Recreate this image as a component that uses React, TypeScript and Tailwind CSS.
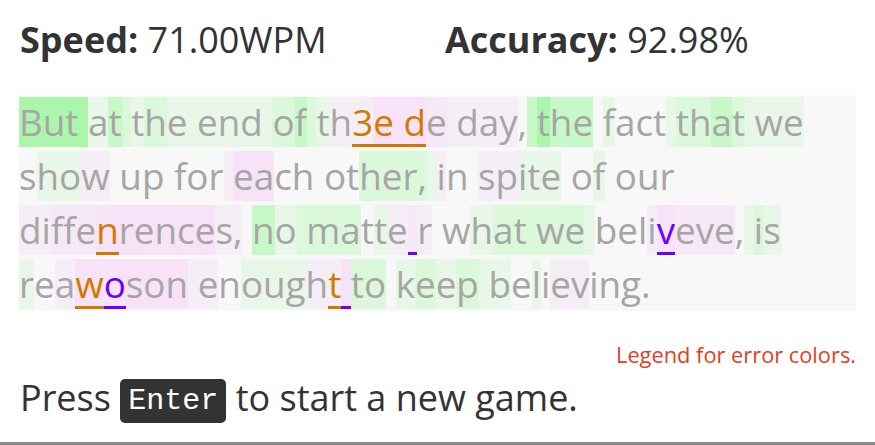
import React from 'react';

// level codes: 3/2/1/0 = greens (strong to faint), a/b/c = pinks (faint to strong), . = none
// err: o = wrong char (orange), v = missed/extra char (violet)
type Seg = [string, string, string?];

const lines: Seg[][] = [
  [
    ["But ", "3"], ["a", "0"], ["t", "2"], [" ", "1"], ["t", "0"], ["h", "1"], ["e end ", "0"],
    ["o", "1"], ["f", "2"], [" ", "1"], ["t", "0"], ["h", "a"], ["3", "a", "o"], ["e d", "c", "o"],
    ["e", "b"], [" day", "a"], [",", "."], [" ", "2"], ["t", "3"], ["he", "2"], [" ", "."],
    ["f", "0"], ["act", "."], [" ", "0"], ["th", "1"], ["a", "2"], ["t", "1"], [" we", "0"],
  ],
  [
    ["s", "."], ["ho", "0"], ["w", "a"], [" up for", "."], [" ", "a"], ["ea", "c"], ["ch ot", "."],
    ["her,", "1"], [" ", "0"], ["i", "a"], ["n", "."], [" ", "."], ["sp", "a"], ["ite", "0"],
    [" o", "."], ["f", "0"], [" our", "."],
  ],
  [
    ["di", "a"], ["ffe", "b"], ["n", "c", "o"], ["rence", "c"], ["s,", "a"], [" ", "."], ["n", "2"],
    ["o", "0"], [" ma", "1"], ["t", "."], ["t", "0"], ["e", "a"], [" ", "b", "v"], ["r", "a"],
    [" w", "."], ["h", "0"], ["at we", "1"], [" ", "0"], ["bel", "."], ["i", "a"], ["v", "c", "v"],
    ["eve", "b"], [",", "."], [" ", "0"], ["i", "1"], ["s", "0"],
  ],
  [
    ["r", "0"], ["e", "."], ["a", "a"], ["w", "c", "o"], ["o", "c", "v"], ["son", "c"], [" e", "a"],
    ["n", "."], ["oug", "0"], ["h", "a"], ["t", "a", "o"], [" ", "c", "v"], ["to", "1"], [" ", "."],
    ["k", "0"], ["e", "1"], ["e", "0"], ["p", "1"], [" b", "0"], ["e", "."], ["l", "0"], ["i", "."],
    ["ev", "a"], ["ing.", "."],
  ],
];

const bg: Record<string, string> = {
  "3": "bg-[#abf6ab]",
  "2": "bg-[#c8f8c8]",
  "1": "bg-[#dbf8db]",
  "0": "bg-[#e9f7e9]",
  a: "bg-[#f6eef6]",
  b: "bg-[#f6e8f6]",
  c: "bg-[#f7e2f7]",
  ".": "",
};

const err: Record<string, string> = {
  o: "text-[#d27a00] shadow-[inset_0_-3px_0_#d27a00]",
  v: "text-[#6a00ff] shadow-[inset_0_-3px_0_#6a00ff]",
};

export default function App() {
  return (
    <div className="w-[875px] h-[445px] bg-white flex flex-col font-['Open_Sans',sans-serif] text-[#333]">
      <div className="px-[19px]">
        <div className="flex pt-[13px] text-[36px] leading-[54px]">
          <div className="w-[426px] pl-px">
            <span className="font-bold">Speed:</span> 71.00WPM
          </div>
          <div>
            <span className="font-bold">Accuracy:</span> 92.98%
          </div>
        </div>

        <div className="mt-[28px] bg-[#f8f8f8] text-[#a6a6a6] text-[36.8px] leading-[54px] whitespace-pre">
          {lines.map((line, i) => (
            <div key={i}>
              {line.map(([t, lv, e], j) => (
                <span key={j} className={`${bg[lv]} ${e ? err[e] : ""}`}>
                  {t}
                </span>
              ))}
            </div>
          ))}
        </div>

        <div className="mt-[31px] text-right text-[21.8px] leading-[26px] text-[#e2401c]">
          Legend for error colors.
        </div>

        <div className="mt-[3px] text-[36px] leading-[54px] pl-px">
          Press{" "}
          <kbd className="inline-block align-[2px] bg-[#333] text-white rounded-[5px] px-[8px] h-[44px] leading-[44px] text-[30px] font-['Liberation_Mono',monospace]">
            Enter
          </kbd>{" "}
          to start a new game.
        </div>
      </div>
      <div className="mt-auto h-[3px] bg-[#8a8a8a]" />
    </div>
  );
}
